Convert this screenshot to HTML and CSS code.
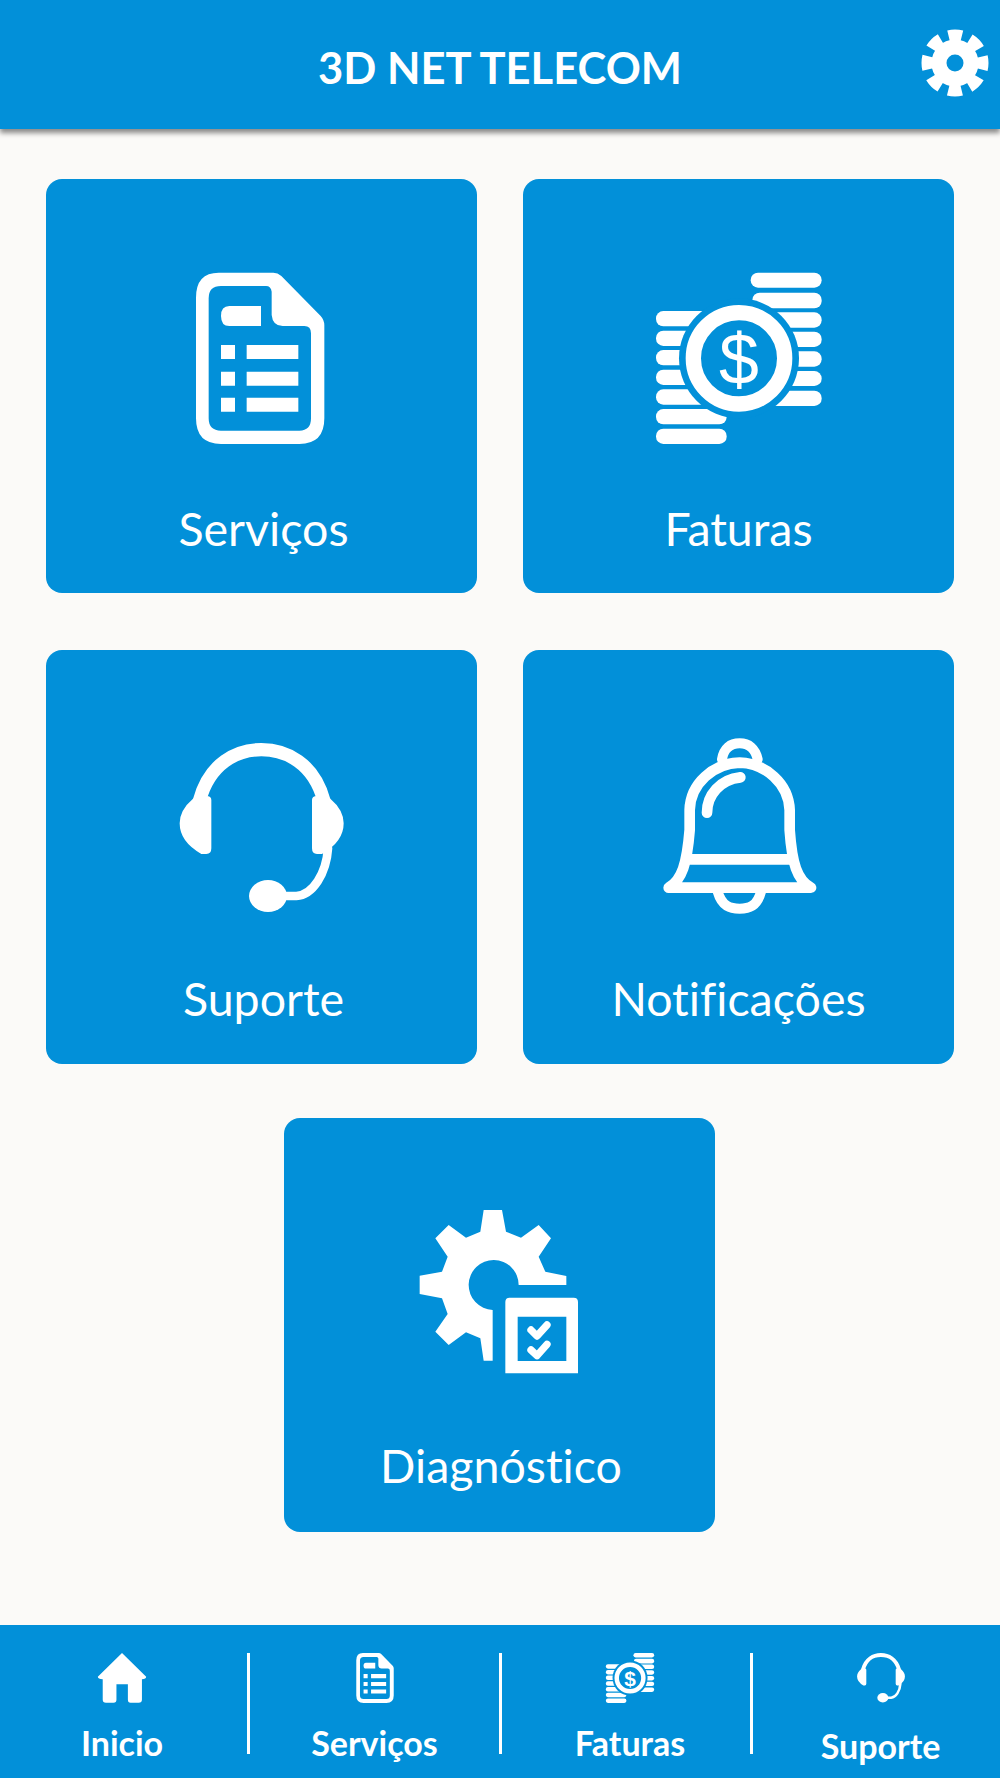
FILE: index.html
```html
<!DOCTYPE html>
<html lang="en">
<head>
  <meta charset="UTF-8">
  <meta name="viewport" content="width=device-width, initial-scale=1.0">
  <title>3D Net Telecom</title>
  <link rel="stylesheet" href="styles.css">
</head>
<body>
  <!-- shared icon shapes, drawn once and reused by the cards and the tab bar -->
  <svg class="defs" aria-hidden="true">
    <defs>
      <g id="i-doc">
        <path fill-rule="evenodd" d="M178 68H342Q355 68 366 78L484 198Q495 210 495 226V505Q495 582 420 582H185Q110 582 110 505V143Q110 68 178 68ZM185 108Q148 108 148 145V505Q148 542 185 542H420Q455 542 455 505V250Q455 228 435 228H370Q340 228 337 195V125Q335 108 320 108Z"/>
        <path d="M305 168V228H210Q185 228 185 198T210 168Z"/>
        <path d="M185 285h42v42h-42zM262 285h155v42H262zM185 365h42v42h-42zM262 365h155v42H262zM185 443h42v42h-42zM262 443h155v42H262z"/>
      </g>
      <g id="i-coins">
        <rect x="330" y="68" width="213" height="45" rx="22"/>
        <rect x="335" y="128" width="208" height="47" rx="22"/>
        <rect x="295" y="187" width="248" height="46" rx="22"/>
        <rect x="295" y="245" width="248" height="46" rx="22"/>
        <rect x="295" y="304" width="248" height="46" rx="22"/>
        <rect x="295" y="363" width="248" height="45" rx="22"/>
        <rect x="295" y="422" width="248" height="46" rx="22"/>
        <rect x="46" y="183" width="250" height="46" rx="22"/>
        <rect x="46" y="242" width="250" height="46" rx="22"/>
        <rect x="46" y="300" width="250" height="46" rx="22"/>
        <rect x="46" y="359" width="250" height="46" rx="22"/>
        <rect x="46" y="418" width="250" height="46" rx="22"/>
        <rect x="46" y="477" width="212" height="46" rx="22"/>
        <rect x="46" y="536" width="212" height="46" rx="22"/>
        <circle class="coin-gap" cx="295" cy="325" r="180"/>
        <circle class="coin-ring" cx="295" cy="325" r="137"/>
        <text class="coin-sign" x="295" y="403" text-anchor="middle">$</text>
      </g>
      <g id="i-headset">
        <path class="line" stroke-width="40" d="M120 240C150 130 230 89 305 89C380 89 462 130 492 240"/>
        <path d="M100 236Q60 270 60 310Q60 365 125 402H140Q155 402 155 385V240Q155 228 140 228H115Q105 230 100 236Z"/>
        <path d="M512 236Q552 270 552 310Q552 365 487 402H472Q457 402 457 385V240Q457 228 472 228H497Q507 230 512 236Z"/>
        <path class="line" stroke-width="26" d="M505 385C500 460 460 525 410 528H370"/>
        <ellipse cx="325" cy="528" rx="57" ry="48"/>
      </g>
      <g id="i-bell">
        <path class="line" stroke-width="32" d="M85 503C125 480 140 430 148 330V270C150 190 220 130 298 128C375 130 445 190 448 270V330C455 430 470 480 512 503Z"/>
        <path class="line" stroke-width="32" d="M150 418H450"/>
        <path class="line" stroke-width="30" d="M245 118C250 85 270 70 298 70C325 70 345 85 352 118"/>
        <path class="line" stroke-width="30" d="M232 515C245 560 270 566 298 566C325 566 350 560 362 515"/>
        <path class="line" stroke-width="32" d="M200 278C200 225 240 178 300 172"/>
      </g>
      <g id="i-diag">
        <path d="M250 60H305L317 125L362 143L415 105L452 145L415 200L435 245L498 258V285H355A75 75 0 1 0 277 360V512H250L240 445L197 427L145 465L105 425L142 372L125 325L58 312V257L125 245L142 200L105 145L145 105L197 143L240 125Z"/>
        <path fill-rule="evenodd" d="M328 323H520Q533 323 533 336V550H315V336Q315 323 328 323ZM352 380V513H498V380Z"/>
        <path class="line" stroke-width="22" d="M392 420L410 438L440 405M392 480L410 497L440 463"/>
      </g>
      <path id="i-home" d="M369 132L443 205Q443 212 430 212V275Q430 284 420 284H395Q387 284 387 275V228H352V275Q352 284 343 284H320Q310 284 310 275V212Q295 212 295 205Z"/>
    </defs>
  </svg>

  <header class="topbar">
    <h1>3D NET TELECOM</h1>
    <svg class="settings" viewBox="-34 -34 68 68" aria-hidden="true">
      <circle class="cog-body" r="16"/>
      <circle class="cog-teeth" r="28"/>
    </svg>
  </header>

  <main class="menu">
    <div class="row">
      <a class="card" href="#">
        <svg class="card-icon" viewBox="8 0 600 630"><use href="#i-doc"/></svg>
        <span>Serviços</span>
      </a>
      <a class="card" href="#">
        <svg class="card-icon" viewBox="-5 0 600 630"><use href="#i-coins"/></svg>
        <span>Faturas</span>
      </a>
    </div>
    <div class="row row-mid">
      <a class="card" href="#">
        <svg class="card-icon" viewBox="7 3 600 630"><use href="#i-headset"/></svg>
        <span>Suporte</span>
      </a>
      <a class="card" href="#">
        <svg class="card-icon" viewBox="-4 3 600 630"><use href="#i-bell"/></svg>
        <span>Notificações</span>
      </a>
    </div>
    <div class="row row-single">
      <a class="card" href="#">
        <svg class="card-icon" viewBox="-4 -3 600 630"><use href="#i-diag"/></svg>
        <span>Diagnóstico</span>
      </a>
    </div>
  </main>

  <nav class="tabs">
    <a class="tab tab-first" href="#">
      <svg class="tab-icon" viewBox="295 132 148 153"><use href="#i-home"/></svg>
      <span>Inicio</span>
    </a>
    <i class="sep"></i>
    <a class="tab" href="#">
      <svg class="tab-icon" viewBox="110 68 385 514"><use href="#i-doc"/></svg>
      <span>Serviços</span>
    </a>
    <i class="sep"></i>
    <a class="tab tab-right" href="#">
      <svg class="tab-icon" viewBox="46 68 497 514"><use href="#i-coins"/></svg>
      <span>Faturas</span>
    </a>
    <i class="sep"></i>
    <a class="tab tab-right tab-last" href="#">
      <svg class="tab-icon" viewBox="60 68 492 514"><use href="#i-headset"/></svg>
      <span>Suporte</span>
    </a>
  </nav>
</body>
</html>
```

FILE: styles.css
```css
* {
  box-sizing: border-box;
}
body {
  margin: 0;
  height: 1778px;
  display: flex;
  flex-direction: column;
  font-family: Lato, "Liberation Sans", sans-serif;
  font-variant-ligatures: none;
  background-color: #fbfaf8;
  color: #fff;
}
a {
  color: inherit;
  text-decoration: none;
}
.defs {
  display: none;
}
.line {
  fill: none;
  stroke: currentColor;
  stroke-linecap: round;
  stroke-linejoin: round;
}
.topbar {
  position: relative;
  height: 129px;
  flex: none;
  display: flex;
  align-items: center;
  justify-content: center;
  background-color: #0290d9;
  box-shadow: 0 4px 5px rgba(0, 0, 0, 0.45);
}
.topbar h1 {
  margin: 6px 0 0;
  font-size: 43.5px;
  font-weight: 700;
  line-height: 1;
}
.settings {
  position: absolute;
  right: 11px;
  top: 29px;
  width: 68px;
  height: 68px;
}
.cog-body {
  fill: none;
  stroke: #fff;
  stroke-width: 15;
}
.cog-teeth {
  fill: none;
  stroke: #fff;
  stroke-width: 11;
  stroke-dasharray: 13.5 8.49;
  stroke-dashoffset: 6.75;
}
.menu {
  flex: 1;
  padding-top: 50px;
  display: flex;
  flex-direction: column;
}
.row {
  display: flex;
  justify-content: center;
  gap: 46px;
  margin-bottom: 57px;
}
.row-mid {
  margin-bottom: 54px;
}
.row-single {
  padding-right: 2px;
}
.card {
  width: 431px;
  height: 414px;
  padding-top: 71px;
  display: flex;
  flex-direction: column;
  align-items: center;
  border-radius: 16px;
  background-color: #0290d9;
  font-size: 46.5px;
}
.card-icon {
  width: 200px;
  height: 210px;
  fill: currentColor;
  color: #fff;
}
.card span {
  margin-top: 42px;
  line-height: 52px;
}
.row-mid .card span {
  margin-top: 41px;
}
.row-single .card span {
  margin-top: 40px;
}
.card:first-child span {
  margin-left: 4px;
}
.coin-gap {
  fill: #0290d9;
}
.coin-ring {
  fill: none;
  stroke: #fff;
  stroke-width: 46;
}
.coin-sign {
  font-family: "Liberation Sans", sans-serif;
  font-size: 215px;
}
.tabs {
  height: 153px;
  flex: none;
  padding-top: 28px;
  display: grid;
  grid-template-columns: 247px 3px 249px 3px 248px 3px 247px;
  align-items: start;
  background-color: #0290d9;
}
.tab {
  display: flex;
  flex-direction: column;
  align-items: center;
  font-size: 34px;
  font-weight: 700;
}
.tab-first {
  padding-right: 3px;
}
.tab-right {
  padding-left: 8px;
}
.tab-icon {
  height: 50px;
  width: 50px;
  fill: currentColor;
}
.tab span {
  margin-top: 21px;
  line-height: 38px;
}
.tab-last span {
  margin-top: 24px;
}
.sep {
  height: 101px;
  background-color: #fff;
}
```
